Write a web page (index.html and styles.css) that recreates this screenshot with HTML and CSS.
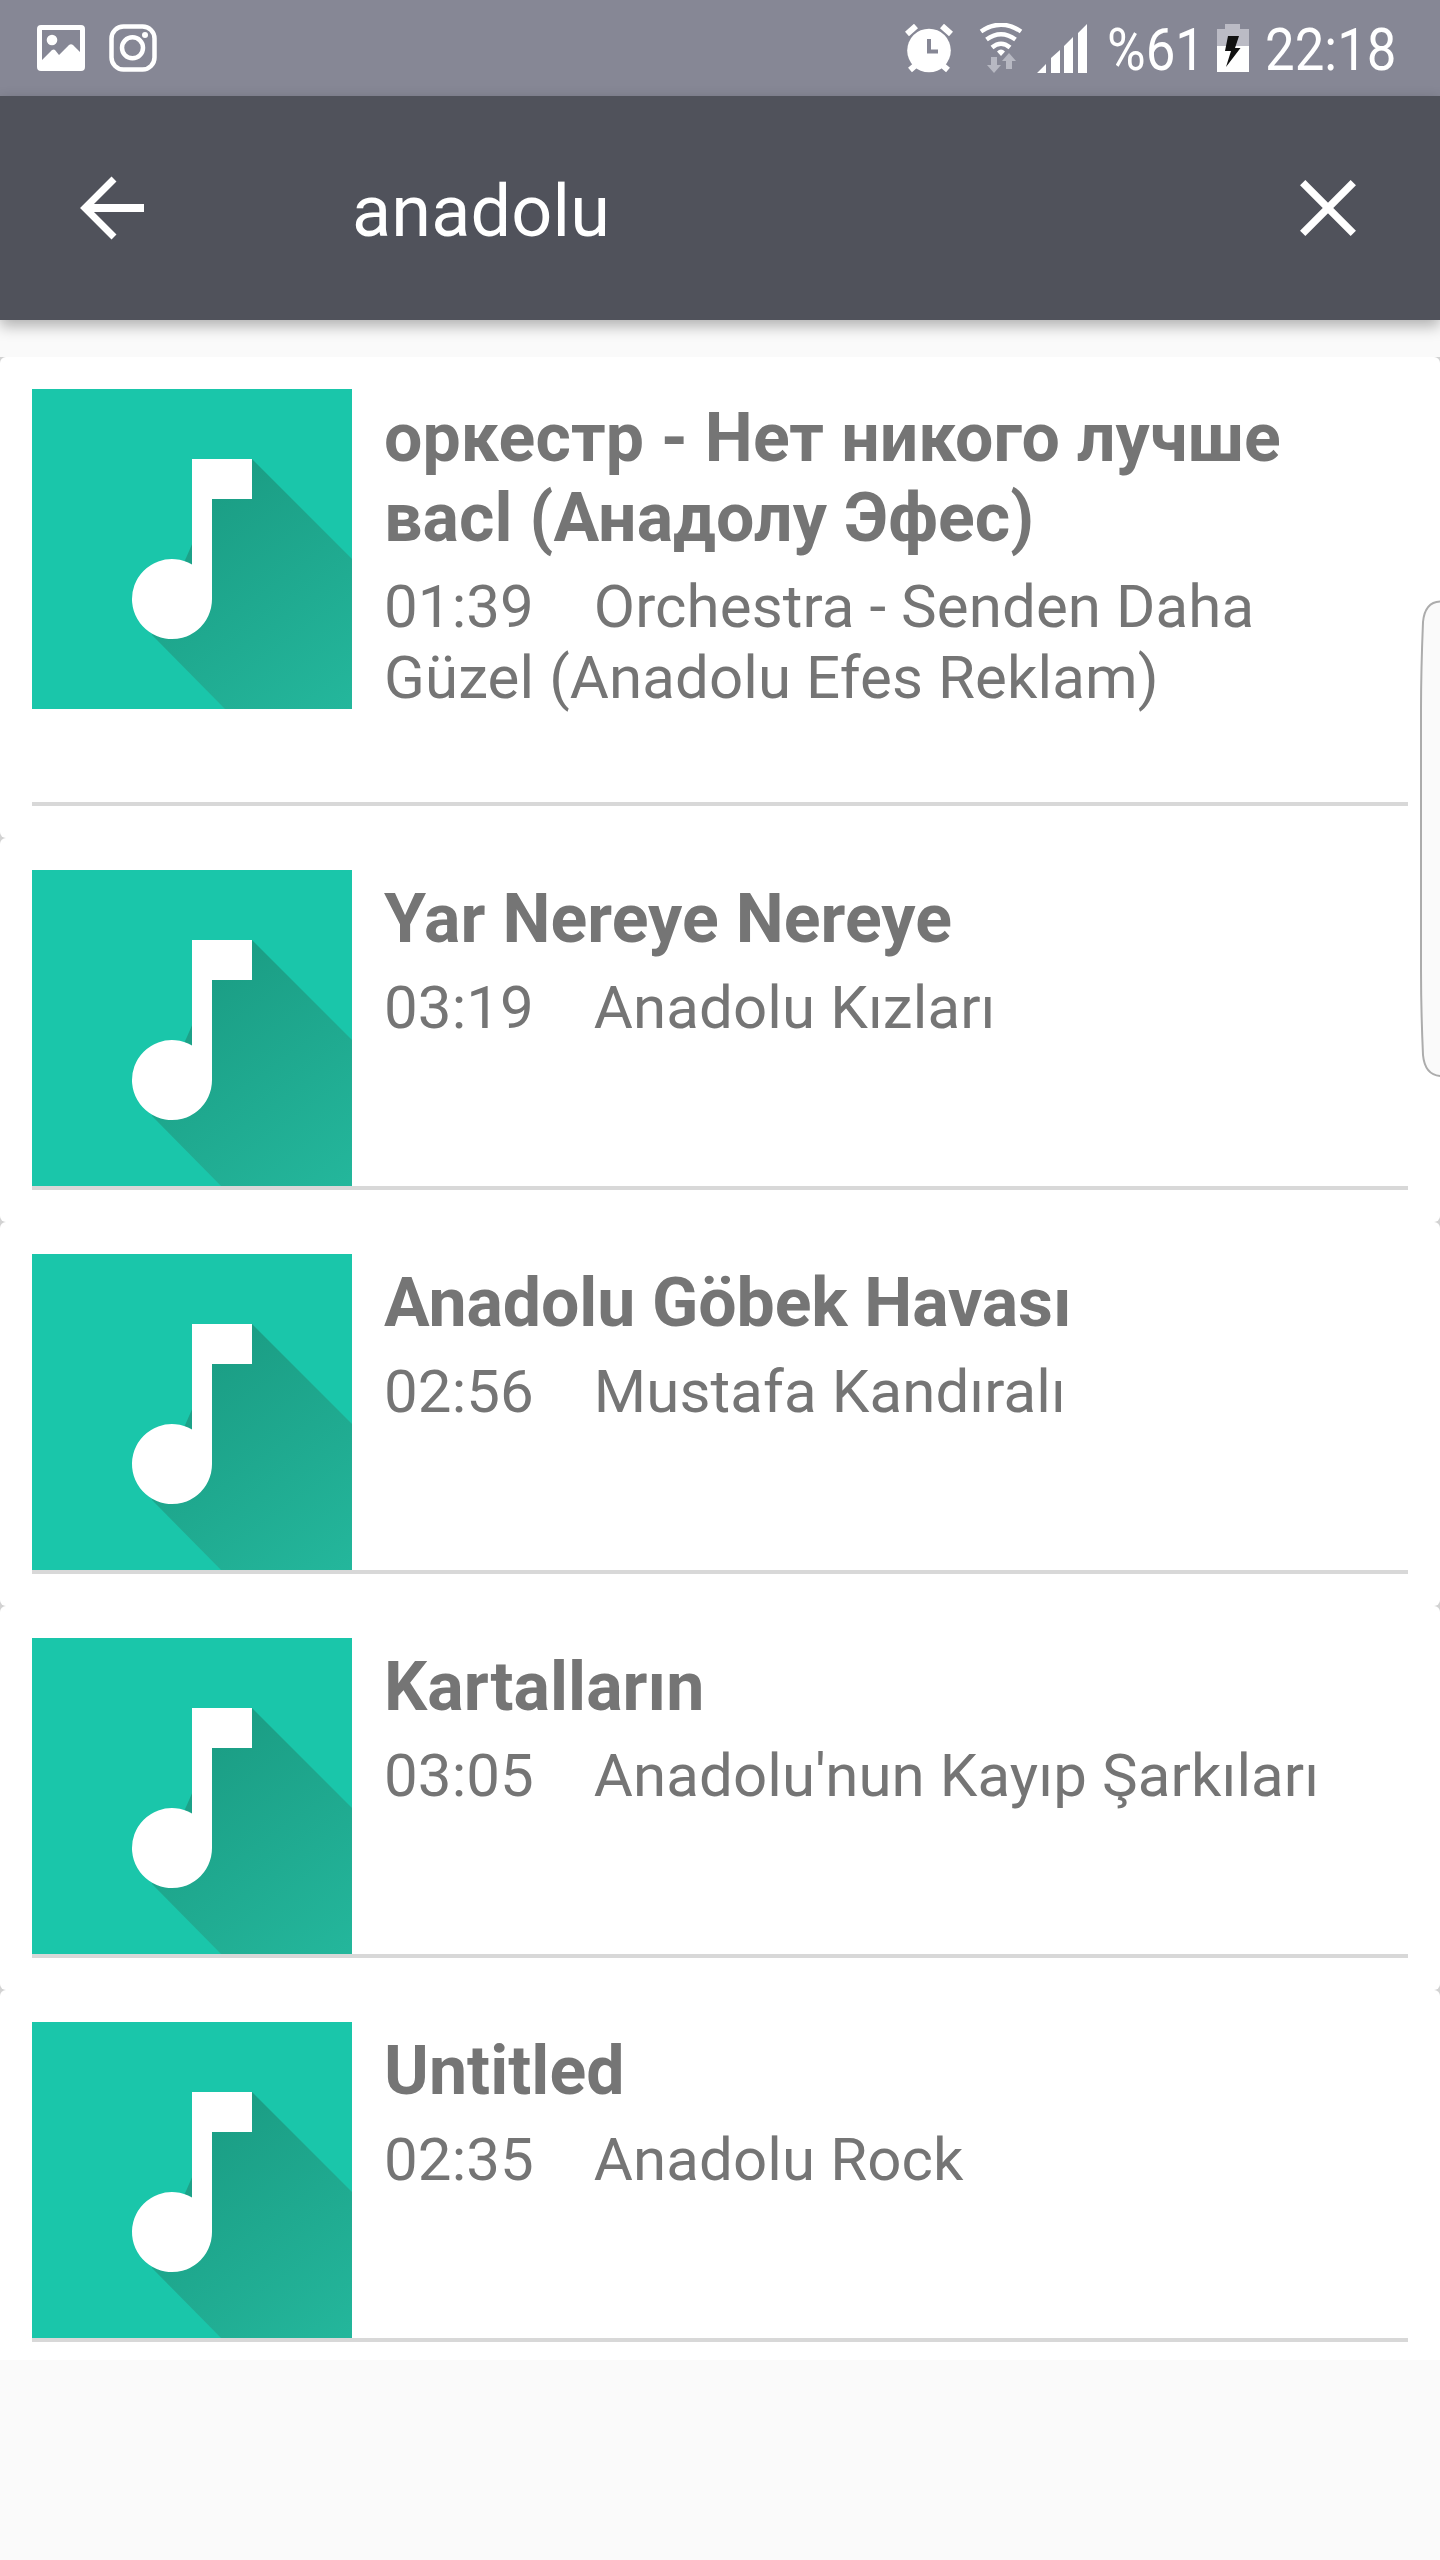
FILE: index.html
```
<!DOCTYPE html>
<html lang="tr">
<head>
<meta charset="utf-8">
<title>anadolu</title>
<link rel="stylesheet" href="styles.css">
</head>
<body>
<svg class="defs" width="0" height="0">
  <defs>
    <linearGradient id="shade" gradientUnits="userSpaceOnUse" x1="170" y1="110" x2="320" y2="320">
      <stop offset="0" stop-color="#1b9e85"/><stop offset="1" stop-color="#24b79c"/>
    </linearGradient>
    <symbol id="note" viewBox="0 0 320 320">
      <rect width="320" height="320" fill="#1ac6aa"/>
      <path d="M220 70L320 170V320H193L120 246L180 110z" fill="url(#shade)"/>
      <path d="M160 70h60v40h-40v100a40 40 0 1 1-20-34.6z" fill="#fff"/>
    </symbol>
  </defs>
</svg>
<div class="screen">
  <div class="status">
    <svg class="picture" width="48" height="46" viewBox="0 0 48 46"><path fill="#fff" fill-rule="evenodd" d="M4 0h40q4 0 4 4v38q0 4-4 4H4q-4 0-4-4V4q0-4 4-4zM5 5v30L15 25q2-1 3 0l4 5 10-10q2-1.500 4 0l7 7V5z"/><circle cx="15" cy="15" r="5.300" fill="#fff"/></svg>
    <svg class="camera" width="48" height="48" viewBox="0 0 48 48" fill="none" stroke="#fff" stroke-width="4.500"><rect x="2.500" y="2.500" width="43" height="43" rx="12"/><circle cx="23.500" cy="23.800" r="10.500"/><circle cx="36" cy="11" r="3" fill="#fff" stroke="none"/></svg>
    <svg class="alarm" width="48" height="50" viewBox="0 0 48 50"><circle cx="24" cy="26.500" r="21.800" fill="#fff"/><path d="M2 10L11 2M46 10L37 2" stroke="#fff" stroke-width="6"/><path d="M5 46l7-6M43 46l-7-6" stroke="#fff" stroke-width="6"/><path d="M24 15v12.500h9" fill="none" stroke="#868795" stroke-width="4"/></svg>
    <svg class="wifi" width="44" height="50" viewBox="0 0 44 50"><g fill="none" stroke="#fff" stroke-width="4.500"><path d="M2 8.500Q22-5 42 8.500"/><path d="M7.500 16.500Q22 6 36.500 16.500"/><path d="M13 24.500Q22 17 31 24.500"/></g><path d="M18 28.500q4-4 8 0L22 33z" fill="#fff"/><path d="M12 34h6v8h4l-7 8-7-8h4zM27 46h6v-8h4l-7-8-7 8h4z" fill="#b7b8c2"/></svg>
    <svg class="signal" width="50" height="49" viewBox="0 0 50 49" fill="#fff"><path d="M0 49l9-9v9zM14 49V34l9-8v23zM27 49V22l9-9v36zM41 49V9l9-9v49z"/></svg>
    <span class="stext percent">%61</span>
    <svg class="battery" width="32" height="48" viewBox="0 0 32 48"><path d="M0 5h8V0h15v5h9v17H0z" fill="#bbbbc5"/><path d="M0 22h32v26H0z" fill="#fff"/><path d="M11 12h11l-4 12h5.500L9 43l5-16H8z" fill="#111"/></svg>
    <span class="stext clock">22:18</span>
  </div>
  <div class="bar">
    <svg class="back" width="64" height="64" viewBox="0 0 64 64" fill="none" stroke="#fff"><path d="M34 3L5 32l29 29" stroke-width="7"/><path d="M6 32h58" stroke-width="8"/></svg>
    <span class="query">anadolu</span>
    <svg class="close" width="56" height="56" viewBox="0 0 56 56" stroke="#fff" stroke-width="7.500"><path d="M2.700 2.700L53.300 53.300M53.300 2.700L2.700 53.300"/></svg>
  </div>
  <div class="list">
    <div class="card tall"><div class="row"><svg class="art"><use href="#note"/></svg><div class="info"><div class="title">оркестр - Нет никого лучше васl (Анадолу Эфес)</div><div class="sub">01:39    Orchestra - Senden Daha Güzel (Anadolu Efes Reklam)</div></div></div></div>
    <div class="card"><div class="row"><svg class="art"><use href="#note"/></svg><div class="info"><div class="title">Yar Nereye Nereye</div><div class="sub">03:19    Anadolu Kızları</div></div></div></div>
    <div class="card"><div class="row"><svg class="art"><use href="#note"/></svg><div class="info"><div class="title tight">Anadolu Göbek Havası</div><div class="sub">02:56    Mustafa Kandıralı</div></div></div></div>
    <div class="card"><div class="row"><svg class="art"><use href="#note"/></svg><div class="info"><div class="title">Kartalların</div><div class="sub">03:05    Anadolu'nun Kayıp Şarkıları</div></div></div></div>
    <div class="card last"><div class="row"><svg class="art"><use href="#note"/></svg><div class="info"><div class="title">Untitled</div><div class="sub">02:35    Anadolu Rock</div></div></div></div>
  </div>
  <svg class="edge" width="20" height="480" viewBox="0 0 20 480"><path d="M22 1.500Q5 1 3 22Q1 70 1 110V370Q1 410 3 455Q5 476 22 476" fill="#fafafa" stroke="#acacac" stroke-width="2"/></svg>
</div>
</body>
</html>
```
FILE: styles.css
```
body { margin: 0; background: #fafafa; font-family: Roboto, "Liberation Sans", sans-serif; }
svg { display: block; flex: none; }
.defs { position: absolute; }
.screen { position: relative; width: 1440px; height: 2560px; overflow: hidden; background: #fafafa; }
.status { display: flex; align-items: flex-start; height: 96px; box-sizing: border-box; padding: 24px 0 0 37px; background: #868795; color: #fff; }
.picture { margin-top: 1px; }
.camera { margin-left: 24px; }
.alarm { margin-left: 748px; }
.wifi { margin-left: 26px; margin-top: -1px; }
.signal { margin-left: 14px; }
.stext { flex: none; font-size: 60px; line-height: 70px; height: 70px; margin-top: -9px; transform: scaleX(.88); transform-origin: 0 0; white-space: nowrap; }
.percent { width: 110px; margin-left: 20px; }
.battery { margin-left: 0; }
.clock { width: 140px; margin-left: 16px; }
.bar { position: relative; z-index: 1; display: flex; align-items: center; height: 224px; box-sizing: border-box; padding: 0 84px 0 80px; background: #50525b; box-shadow: 0 6px 14px rgba(0,0,0,.3); color: #fff; }
.query { flex: 1; margin-left: 208px; padding-top: 8px; font-size: 72px; line-height: 84px; letter-spacing: .15px; }
.list { margin-top: 37px; background: linear-gradient(90deg, #d2d2d2 8px, #fff 8px, #fff 1432px, #d2d2d2 1432px); }
.card { height: 384px; box-sizing: border-box; padding: 32px; background: #fff; border-radius: 6px; }
.row { display: flex; height: 320px; box-sizing: border-box; overflow: hidden; border-bottom: 4px solid #d8d8d8; }
.tall { height: 481px; }
.tall .row { height: 417px; }
.last { height: 370px; padding-bottom: 18px; border-radius: 6px 6px 0 0; }
.art { width: 320px; height: 320px; }
.info { width: 1024px; padding: 9px 0 0 32px; color: #757575; }
.title { font-size: 68px; font-weight: 700; line-height: 80px; letter-spacing: .08px; }
.tight { letter-spacing: -.1px; }
.sub { margin-top: 13px; font-size: 60px; line-height: 71px; letter-spacing: .1px; white-space: pre-wrap; }
.edge { position: absolute; right: 0; top: 600px; }
```
